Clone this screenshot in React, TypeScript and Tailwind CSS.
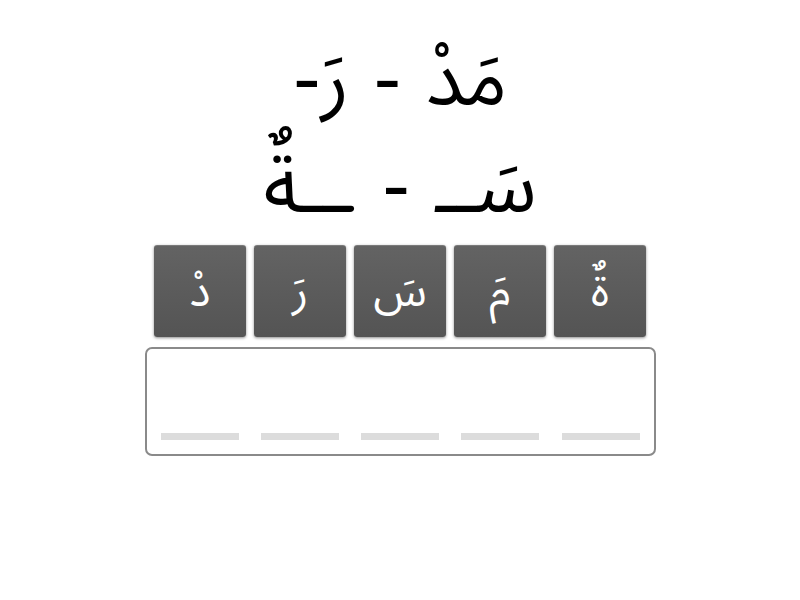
const tiles = ["دْ", "رَ", "سَ", "مَ", "ةٌ"];

function Dash({ text }: { text: string }) {
  return <span style={{ fontFamily: '"DejaVu Sans", sans-serif' }}>{text}</span>;
}

export default function App() {
  return (
    <div
      className="w-[800px] h-[600px] bg-white flex flex-col items-center"
      style={{ fontFamily: '"Noto Sans Arabic", "Noto Sans", "Open Sans", sans-serif' }}
    >
      <div dir="rtl" className="mt-[26px] text-[77px] leading-[105px] text-black text-center whitespace-pre">
        <div>
          مَدْ<Dash text=" - " />رَ<Dash text="-" />
        </div>
        <div>
          سَــ<Dash text=" - " />ــةٌ
        </div>
      </div>
      <div className="mt-[5px] flex gap-[8px]">
        {tiles.map((t) => (
          <div
            key={t}
            className="w-[92px] h-[92px] rounded-[3px] bg-gradient-to-b from-[#636363] to-[#545454] border-t border-[#7a7a7a] shadow-[0_1px_3px_rgba(0,0,0,0.45)] flex items-center justify-center text-white text-[44px]"
          >
            {t}
          </div>
        ))}
      </div>
      <div className="mt-[10px] w-[511px] h-[109px] border-2 border-[#8a8a8a] rounded-[7px] flex items-end justify-between px-[14px] pb-[14px]">
        {tiles.map((t) => (
          <div key={t} className="w-[78px] h-[7px] bg-[#dcdcdc]" />
        ))}
      </div>
    </div>
  );
}
